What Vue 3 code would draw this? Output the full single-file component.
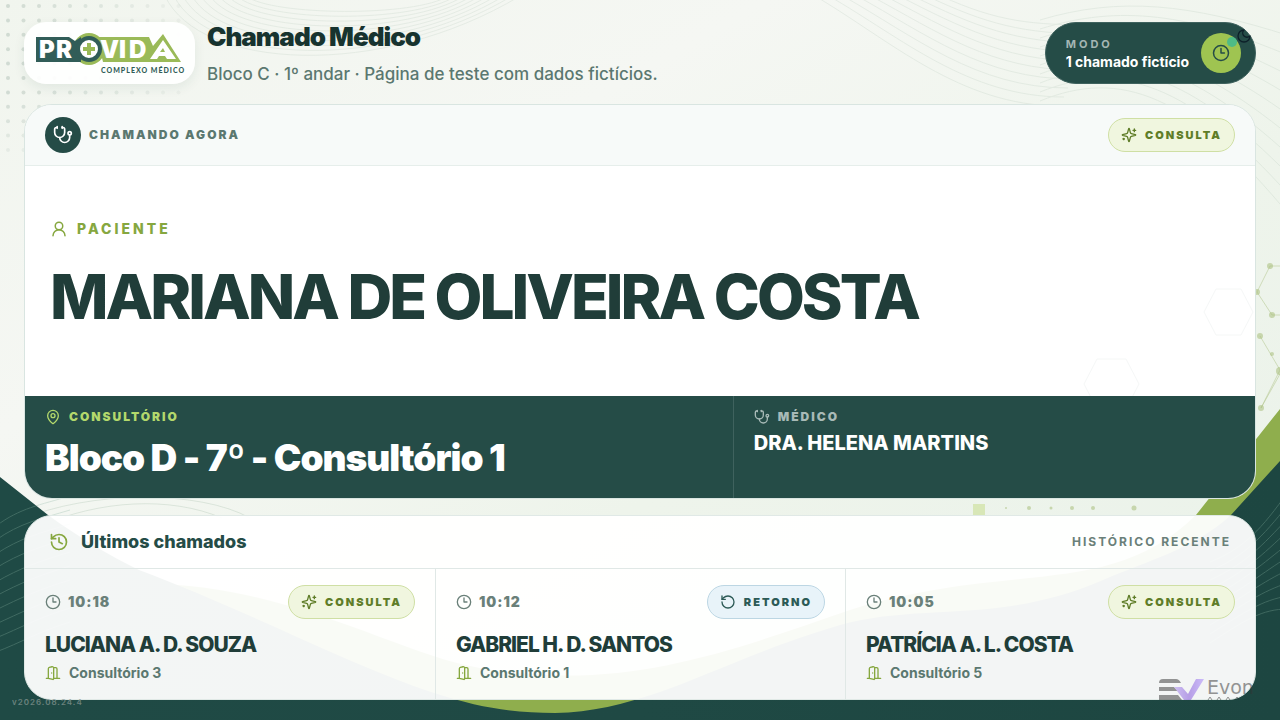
<script setup>
import { h } from 'vue'

const shapes = {
  stethoscope: [
    'M11 2v2', 'M5 2v2',
    'M5 3H4a2 2 0 0 0-2 2v4a6 6 0 0 0 12 0V5a2 2 0 0 0-2-2h-1',
    'M8 15a6 6 0 0 0 12 0v-3', 'M18 10a2 2 0 1 0 4 0a2 2 0 1 0-4 0',
  ],
  sparkles: [
    'M9.937 15.5A2 2 0 0 0 8.5 14.063l-6.135-1.582a.5.5 0 0 1 0-.962L8.5 9.936A2 2 0 0 0 9.937 8.5l1.582-6.135a.5.5 0 0 1 .963 0L14.063 8.5A2 2 0 0 0 15.5 9.937l6.135 1.581a.5.5 0 0 1 0 .964L15.5 14.063a2 2 0 0 0-1.437 1.437l-1.582 6.135a.5.5 0 0 1-.963 0z',
    'M20 3v4', 'M22 5h-4', 'M4 17v2', 'M5 18H3',
  ],
  clock: ['M2 12a10 10 0 1 0 20 0a10 10 0 1 0-20 0', 'M12 6v6h4.5'],
  user: ['M7 8a5 5 0 1 0 10 0a5 5 0 1 0-10 0', 'M20 21a8 8 0 0 0-16 0'],
  pin: [
    'M20 10c0 4.993-5.539 10.193-7.399 11.799a1 1 0 0 1-1.202 0C9.539 20.193 4 14.993 4 10a8 8 0 0 1 16 0',
    'M9 10a3 3 0 1 0 6 0a3 3 0 1 0-6 0',
  ],
  history: ['M3 12a9 9 0 1 0 9-9 9.75 9.75 0 0 0-6.74 2.74L3 8', 'M3 3v5h5', 'M12 7v5l4 2'],
  rotate: ['M3 12a9 9 0 1 0 9-9 9.75 9.75 0 0 0-6.74 2.74L3 8', 'M3 3v5h5'],
  door: [
    'M13 4h3a2 2 0 0 1 2 2v14', 'M2 20h3', 'M13 20h9', 'M10 12v.01',
    'M13 4.562v16.157a1 1 0 0 1-1.242.97L5 20V5.562a2 2 0 0 1 1.515-1.94l4-1A2 2 0 0 1 13 4.561Z',
  ],
  moon: ['M12 3a6 6 0 0 0 9 9 9 9 0 1 1-9-9Z'],
}

const Icon = (props) =>
  h('svg', {
    width: props.size, height: props.size, viewBox: '0 0 24 24', fill: 'none',
    stroke: 'currentColor', 'stroke-width': 2, 'stroke-linecap': 'round',
    'stroke-linejoin': 'round', 'aria-hidden': 'true',
  }, shapes[props.name].map((d) => h('path', { d })))
Icon.props = ['name', 'size']

const calls = [
  { time: '10:18', type: 'Consulta', name: 'LUCIANA A. D. SOUZA', room: 'Consultório 3' },
  { time: '10:12', type: 'Retorno', name: 'GABRIEL H. D. SANTOS', room: 'Consultório 1' },
  { time: '10:05', type: 'Consulta', name: 'PATRÍCIA A. L. COSTA', room: 'Consultório 5' },
]

const dots = []
for (let r = 0; r < 11; r++) {
  for (let c = 0; c < 12; c++) {
    const o = 0.2 - c * 0.014 - Math.max(0, r - 6) * 0.03
    if (o > 0.02) dots.push({ x: 8 + c * 15.5, y: 6 + r * 14.4, o })
  }
}
const lines = [0, 1, 2, 3, 4, 5, 6, 7, 8, 9]
</script>

<template>
  <div class="page">
    <svg class="backdrop" viewBox="0 0 1280 720" preserveAspectRatio="none" aria-hidden="true">
      <defs>
        <linearGradient id="paper" x1="0" y1="0" x2="1" y2="1">
          <stop offset="0" stop-color="#f1f5ee" />
          <stop offset=".3" stop-color="#f5f7f3" />
          <stop offset=".6" stop-color="#eef4eb" />
          <stop offset="1" stop-color="#eaf2ea" />
        </linearGradient>
        <linearGradient id="deep" x1="0" y1="0" x2="1" y2="0">
          <stop offset="0" stop-color="#1f4a45" />
          <stop offset=".5" stop-color="#1f4944" />
          <stop offset="1" stop-color="#1d4641" />
        </linearGradient>
      </defs>
      <rect width="1280" height="720" fill="url(#paper)" />
      <circle v-for="(d, i) in dots" :key="i" :cx="d.x" :cy="d.y" r="2" fill="#4f7263" :opacity="d.o" />
      <g fill="none" stroke="#7fa08a" opacity=".12">
        <path v-for="n in lines" :key="n" :d="`M${165 + n * 9} -4C${200 + n * 8} ${70 - n * 6} ${380 + n * 4} ${80 - n * 7} ${520 - n * 8} -4`" />
        <path v-for="n in lines" :key="'a' + n" :d="`M${815 + n * 14} -4C${890 + n * 12} ${40 - n * 2} ${960 + n * 8} ${106 - n * 9} ${1060 + n * 4} ${106 - n * 9}`" />
        <path v-for="n in lines" :key="'b' + n" :d="`M1040 ${20 + n * 9}C1120 ${-4 + n * 8} 1190 ${4 + n * 10} 1290 ${36 + n * 20}`" />
      </g>
      <g fill="none" stroke="#a9bf7c" opacity=".45">
        <path d="M1290 266h-20l-13 26 15 23h18M1260 336l20 34-19 38M1261 408l19-34" />
      </g>
      <g fill="#a9bf7c" opacity=".55">
        <circle cx="1270" cy="266" r="3" /><circle cx="1257" cy="292" r="3" />
        <circle cx="1272" cy="315" r="3" /><circle cx="1260" cy="336" r="3" />
        <circle cx="1272" cy="354" r="2" /><circle cx="1280" cy="371" r="4" />
        <circle cx="1261" cy="408" r="3" /><circle cx="1006" cy="508" r="1" />
        <circle cx="1029" cy="508" r="2" /><circle cx="1051" cy="508" r="1.5" />
        <circle cx="1072" cy="508" r="2" /><circle cx="1093" cy="508" r="2" />
        <circle cx="1134" cy="508" r="2.5" />
      </g>
      <rect x="973" y="504" width="12" height="12" fill="#d8e7b7" />
      <g fill="none" stroke="#5e8a6a" opacity=".16">
        <path d="M20 520C90 490 200 490 250 518M40 526C100 500 170 496 222 518" />
      </g>
      <path fill="#8fae4d" d="M150 584C290 585 400 655 480 668C620 692 720 655 850 610C1010 560 1110 600 1196 515L1280 409V720H400Z" />
      <path fill="url(#deep)" d="M0 477L48 515C80 538 110 556 139 570C200 593 253 617 333 653C440 700 490 713 555 713C650 711 720 660 840 625C920 602 1000 625 1103 580C1150 560 1195 548 1231 515L1280 461V720H0Z" />
      <g fill="none" stroke="#8db6a4" opacity=".3">
        <path v-for="n in lines" :key="n" :d="`M-4 ${526 + n * 14}C20 ${508 + n * 15} 40 ${505 + n * 14} 70 ${496 + n * 14}`" />
        <path v-for="n in lines" :key="'r' + n" :d="`M1210 ${562 + n * 9}C1245 ${548 + n * 8} 1262 ${528 + n * 9} 1288 ${492 + n * 13}`" />
      </g>
    </svg>

    <header class="top">
      <div class="logo">
        <svg width="151" height="46" viewBox="35 30 151 46" role="img" aria-label="Provida Complexo Médico">
          <circle cx="90" cy="49" r="16" fill="#9aba58" />
          <path d="M98 37H150L154 46L164 34L182 62H104Z" fill="#9aba58" />
          <path d="M37 37H70L76 41L82 37V62H37Z" fill="#315d58" />
          <path d="M151 59L164 40L177 59H168L166 56H160L158 59ZM161 52H166L164 48Z" fill="#fff" fill-rule="evenodd" />
          <g class="word" fill="#fff">
            <text y="58"><tspan x="101">V</tspan><tspan x="120">I</tspan><tspan x="130">D</tspan></text>
            <text y="58"><tspan x="40">P</tspan><tspan x="57">R</tspan></text>
          </g>
          <circle cx="90" cy="49" r="11" fill="#fff" stroke="#315d58" stroke-width="4" />
          <path d="M90 43V55M84 49H96" stroke="#9aba58" stroke-width="4" />
          <text class="word-sub" x="102" y="73" fill="#315d58">COMPLEXO MÉDICO</text>
        </svg>
      </div>
      <div class="heading">
        <h1>Chamado Médico</h1>
        <p>Bloco C · 1º andar · Página de teste com dados fictícios.</p>
      </div>
      <div class="mode">
        <div class="mode-text">
          <span class="mode-label">MODO</span>
          <strong>1 chamado fictício</strong>
        </div>
        <span class="mode-icon"><Icon name="clock" :size="18" /></span>
        <span class="online"></span>
        <button class="theme" type="button" aria-label="Alternar tema"><Icon name="moon" :size="16" /></button>
      </div>
    </header>

    <main class="stack">
      <section class="card current">
        <div class="current-head">
          <span class="round"><Icon name="stethoscope" :size="20" /></span>
          <h2 class="now">CHAMANDO AGORA</h2>
          <span class="badge"><Icon name="sparkles" :size="16" />CONSULTA</span>
        </div>
        <div class="patient">
          <svg class="molecules" width="300" height="180" viewBox="0 0 300 180" fill="none" stroke="#1f4a45" aria-hidden="true">
            <path d="M249 96L261 73H286L298 96L286 119H261ZM129 168L142 143H171L184 168L171 193H142Z" />
          </svg>
          <span class="label patient-label"><Icon name="user" :size="18" />PACIENTE</span>
          <p class="patient-name">MARIANA DE OLIVEIRA COSTA</p>
        </div>
        <div class="place">
          <div class="cell">
            <span class="label lime"><Icon name="pin" :size="16" />CONSULTÓRIO</span>
            <p class="room">Bloco D - 7º - Consultório 1</p>
          </div>
          <div class="cell doctor">
            <span class="label pale"><Icon name="stethoscope" :size="16" />MÉDICO</span>
            <p class="doctor-name">DRA. HELENA MARTINS</p>
          </div>
        </div>
      </section>

      <section class="card recent">
        <div class="recent-head">
          <Icon name="history" :size="20" />
          <h2>Últimos chamados</h2>
          <span>HISTÓRICO RECENTE</span>
        </div>
        <div class="calls">
          <article v-for="c in calls" :key="c.time" class="call">
            <div class="call-top">
              <span class="time"><Icon name="clock" :size="16" />{{ c.time }}</span>
              <span class="badge" :class="{ blue: c.type === 'Retorno' }">
                <Icon :name="c.type === 'Retorno' ? 'rotate' : 'sparkles'" :size="16" />{{ c.type.toUpperCase() }}
              </span>
            </div>
            <h3>{{ c.name }}</h3>
            <p class="call-room"><Icon name="door" :size="16" />{{ c.room }}</p>
          </article>
        </div>
      </section>
    </main>

    <span class="version">v2026.08.24.4</span>
    <div class="maker">
      <svg width="46" height="24" viewBox="0 0 46 24" aria-hidden="true">
        <defs>
          <linearGradient id="vee" x1="0" y1="0" x2="1" y2="0">
            <stop offset="0" stop-color="#a98bf0" />
            <stop offset=".5" stop-color="#7a49d8" />
            <stop offset="1" stop-color="#a684ff" />
          </linearGradient>
        </defs>
        <path fill="#333" d="M4 1H17Q20 1 22 5H0Q0 1 4 1ZM0 9H15L19 13H0ZM0 17H19L23 22H0Z" />
        <path fill="url(#vee)" d="M15 9H23L29 16L37 1H45L32 22H25Z" />
      </svg>
      <div class="maker-name">
        <span>Evon</span>
        <svg width="40" height="4" viewBox="0 0 40 4" fill="none" stroke="#333" aria-hidden="true">
          <path d="M1 4L3 1L5 4M10 4L12 1L14 4M19 4L21 1L23 4M28 4L30 1L32 4" />
        </svg>
      </div>
    </div>
  </div>
</template>

<style>
body { margin: 0; }
</style>

<style scoped>
.page {
  position: relative;
  box-sizing: border-box;
  min-height: 100vh;
  padding: 22px 24px 20px;
  display: flex;
  flex-direction: column;
  gap: 20px;
  overflow: hidden;
  font-family: Inter, "Liberation Sans", sans-serif;
  color: #203d39;
}
.page svg { flex: none; display: block; }
h1, h2, h3, p { margin: 0; }
.backdrop { position: absolute; inset: 0; width: 100%; height: 100%; }

.top { position: relative; display: flex; align-items: center; gap: 12px; height: 62px; }
.logo {
  box-sizing: border-box;
  height: 62px;
  padding: 8px 10px;
  border-radius: 22px;
  background: rgba(255, 255, 255, 0.92);
  box-shadow: 0 4px 12px rgba(31, 74, 69, 0.08);
}
.word { font: 900 24px Inter, sans-serif; }
.word-sub { font: 900 7px Lato, sans-serif; letter-spacing: 1px; }
.heading { flex: 1; padding-top: 2px; }
h1 { font-size: 26px; line-height: 32px; font-weight: 900; letter-spacing: -1px; color: #17332f; }
.heading p { margin-top: 8px; font-size: 17px; line-height: 26px; font-weight: 500; color: #5b7870; }
.mode {
  position: relative;
  box-sizing: border-box;
  height: 62px;
  padding: 0 14px 0 20px;
  display: flex;
  align-items: center;
  gap: 12px;
  border-radius: 31px;
  background: #254c47;
  border: 1px solid #3f625e;
  color: #fff;
}
.mode-text { display: flex; flex-direction: column; }
.mode-label { font-size: 11px; line-height: 18px; font-weight: 700; letter-spacing: 3px; color: #a4b6b3; }
.mode strong { font-size: 14px; line-height: 18px; font-weight: 700; }
.mode-icon {
  width: 40px; height: 40px; border-radius: 50%;
  display: grid; place-items: center;
  background: #9fc451; color: #254c47;
}
.online { position: absolute; right: 18px; top: 14px; width: 10px; height: 10px; border-radius: 50%; background: #4fbb86; }
.theme { position: absolute; right: 3px; top: 5px; padding: 0; border: 0; background: none; color: #0d2029; }

.stack { position: relative; flex: 1; display: flex; flex-direction: column; gap: 16px; }
.card { border: 1px solid #d9e5e1; border-radius: 28px; overflow: hidden; }
.current { flex: 1; display: flex; flex-direction: column; background: rgba(255, 255, 255, 0.98); }
.current-head {
  box-sizing: border-box; height: 61px; padding: 0 20px;
  display: flex; align-items: center; gap: 8px;
  background: #f7faf9; border-bottom: 1px solid #e6eeeb;
}
.round { width: 36px; height: 36px; border-radius: 50%; display: grid; place-items: center; background: #254c47; color: #fff; }
.now { flex: 1; font-size: 12px; line-height: 16px; font-weight: 900; letter-spacing: 2px; color: #5b7870; }
.badge {
  box-sizing: border-box; height: 34px; padding: 0 12px;
  display: inline-flex; align-items: center; gap: 8px;
  border: 1px solid #cfdfa4; border-radius: 17px; background: #f0f6df;
  color: #5f7d28; font-size: 11px; line-height: 16px; font-weight: 900; letter-spacing: 2px;
}
.badge.blue { border-color: #bcd6e3; background: #e8f3f9; color: #2c5a56; }
.patient { position: relative; flex: 1; padding: 0 25px 8px; display: flex; flex-direction: column; justify-content: center; gap: 20px; }
.molecules { position: absolute; right: 0; bottom: 0; opacity: 0.04; }
.label { display: flex; align-items: center; gap: 8px; font-size: 12px; line-height: 16px; font-weight: 900; letter-spacing: 2px; }
.patient-label { gap: 9px; font-size: 14px; line-height: 20px; font-weight: 800; letter-spacing: 3px; color: #86a73f; }
.patient-name { font-size: 62px; line-height: 76px; font-weight: 800; letter-spacing: -3px; }
.place { display: grid; grid-template-columns: 1.355fr 1fr; min-height: 102px; background: #254c47; color: #fff; }
.cell { padding: 13px 20px 12px; }
.doctor { border-left: 1px solid #3f625e; }
.lime { color: #b3d86c; }
.pale { color: #a8bab7; }
.room { margin-top: 9px; font-size: 37px; line-height: 48px; font-weight: 900; letter-spacing: -1px; }
.doctor-name { margin-top: 6px; font-size: 20px; line-height: 24px; font-weight: 800; }

.recent { background: rgba(255, 255, 255, 0.95); border-color: #e0e9e6; }
.recent-head { box-sizing: border-box; height: 53px; padding: 0 24px; display: flex; align-items: center; gap: 12px; border-bottom: 1px solid #e0e8e6; color: #86a73f; }
.recent-head h2 { flex: 1; font-size: 18px; line-height: 24px; font-weight: 800; color: #254c47; }
.recent-head span { font-size: 12px; line-height: 16px; font-weight: 700; letter-spacing: 2px; color: #6a8079; }
.calls { display: grid; grid-template-columns: repeat(3, 1fr); }
.call { padding: 16px 20px; border-left: 1px solid #e0e8e6; }
.call:first-child { border-left: 0; }
.call-top { display: flex; justify-content: space-between; align-items: center; }
.time { display: flex; align-items: center; gap: 7px; font-size: 14px; line-height: 20px; font-weight: 900; color: #6a8079; letter-spacing: 1px; }
.call h3 { margin-top: 14px; font-size: 21px; line-height: 24px; font-weight: 800; letter-spacing: -1px; }
.call-room { margin-top: 6px; display: flex; align-items: center; gap: 8px; font-size: 14px; line-height: 20px; font-weight: 700; color: #5b7870; }
.call-room svg { color: #86a73f; }

.version { position: absolute; left: 12px; bottom: 12px; font-size: 8px; line-height: 12px; font-weight: 600; letter-spacing: 1px; color: #8a9a96; opacity: 0.7; }
.maker { position: absolute; right: 22px; bottom: 18px; width: 99px; display: flex; gap: 2px; opacity: 0.5; color: #333; }
.maker-name span { display: block; font: 19px/18px "DejaVu Sans", sans-serif; }
</style>
